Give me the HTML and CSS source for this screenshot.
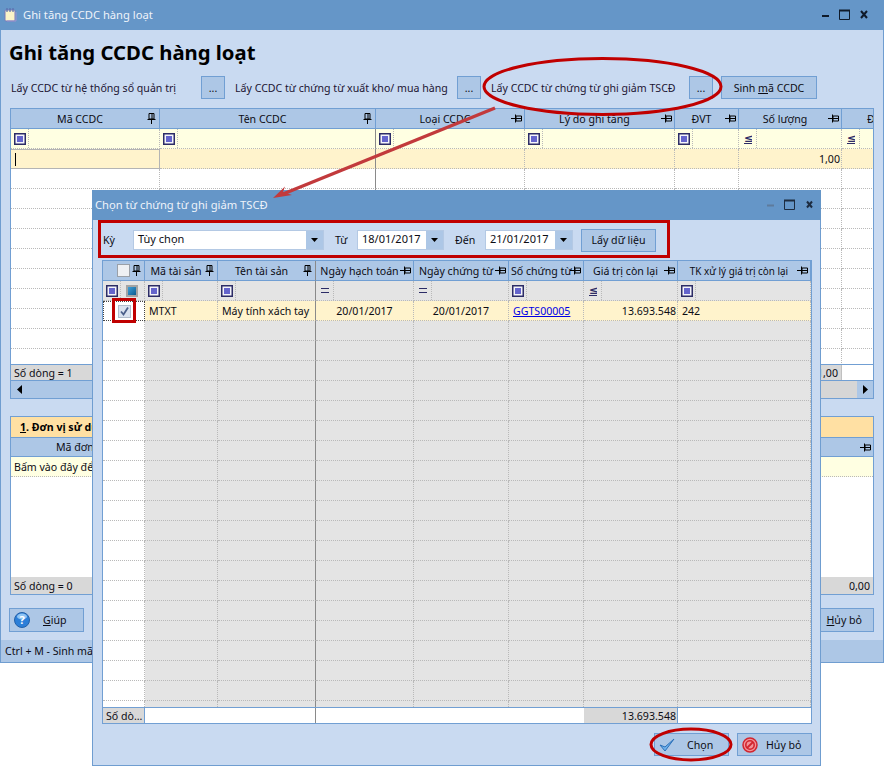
FILE: index.html
```html
<!DOCTYPE html>
<html lang="vi">
<head>
<meta charset="utf-8">
<title>Ghi tăng CCDC hàng loạt</title>
<link rel="stylesheet" href="styles.css">
</head>
<body>
<svg class="defs" width="0" height="0" aria-hidden="true">
  <symbol id="pin-v" viewBox="0 0 9 11"><path d="M2 .5h5v5.500H2zM5 1v5M.5 6.500h8M4.500 7v4" fill="none" stroke="#000"/></symbol>
  <symbol id="pin-h" viewBox="0 0 11 9"><path d="M5 2h5.500v5H5zM5 4.500H10M4.500 .5v8M0 4.500h4" fill="none" stroke="#000"/></symbol>
  <symbol id="flt" viewBox="0 0 12 12"><rect x=".75" y=".75" width="10.500" height="10.500" fill="#f4f4fa" stroke="#2c2c66" stroke-width="1.500"/><rect x="3" y="3" width="6" height="6" fill="#6464cc"/></symbol>
  <symbol id="arrow-d" viewBox="0 0 9 5"><path d="M1 0h7L4.500 4z" fill="#000"/></symbol>
</svg>

<main class="win">
  <header class="bar">
    <svg class="appicon" width="13" height="16" viewBox="0 0 13 16"><rect x="1" y="3" width="10" height="11" rx="1" fill="#fbf3c8" stroke="#7a78b8"/><path d="M3 1v4M6 1v4M9 1v4" stroke="#5a6fae" stroke-width="1.200"/><path d="M3 14h9v-9" fill="none" stroke="#9a94d0"/></svg>
    <span class="bar-title">Ghi tăng CCDC hàng loạt</span>
    <span class="ctl">
      <svg width="60" height="14" viewBox="0 0 60 14"><path d="M1 8h7" stroke="#0f1a2a" stroke-width="2"/><path d="M18.500 2.500h10v9h-10z" fill="none" stroke="#0f1a2a"/><path d="M18 2.500h11" stroke="#0f1a2a" stroke-width="2"/><path d="M40 3l6 7M46 3l-6 7" stroke="#0f1a2a" stroke-width="2"/></svg>
    </span>
  </header>
  <h1 class="heading">Ghi tăng CCDC hàng loạt</h1>
  <div class="tools">
    <span class="lbl lbl-a">Lấy CCDC từ hệ thống sổ quản trị</span><button class="btn dots">...</button>
    <span class="lbl lbl-b">Lấy CCDC từ chứng từ xuất kho/ mua hàng</span><button class="btn dots">...</button>
    <span class="lbl lbl-c">Lấy CCDC từ chứng từ ghi giảm TSCĐ</span><button class="btn dots">...</button>
    <button class="btn sinh"><span>Sinh <u>m</u>ã CCDC</span></button>
  </div>

  <section class="grid g-main">
    <div class="row head">
      <b>Mã CCDC<svg class="pin"><use href="#pin-v"/></svg></b><b>Tên CCDC<svg class="pin"><use href="#pin-v"/></svg></b><b>Loại CCDC<svg class="pin pinh"><use href="#pin-h"/></svg></b><b>Lý do ghi tăng<svg class="pin pinh"><use href="#pin-h"/></svg></b><b>ĐVT<svg class="pin pinh"><use href="#pin-h"/></svg></b><b>Số lượng<svg class="pin pinh"><use href="#pin-h"/></svg></b><b class="clip">Đ</b>
    </div>
    <div class="row filter yl">
      <i><svg class="f"><use href="#flt"/></svg></i><i><svg class="f"><use href="#flt"/></svg></i><i><svg class="f"><use href="#flt"/></svg></i><i><svg class="f"><use href="#flt"/></svg></i><i><svg class="f"><use href="#flt"/></svg></i><i><span class="le">≤</span></i><i><span class="le">≤</span></i>
    </div>
    <div class="row act">
      <i class="cur"><span class="caret"></span></i><i></i><i></i><i></i><i></i><i class="r">1,00</i><i></i>
    </div>
    <div class="rows">
      <div class="row"><i></i><i></i><i></i><i></i><i></i><i></i><i></i></div>
      <div class="row"><i></i><i></i><i></i><i></i><i></i><i></i><i></i></div>
      <div class="row"><i></i><i></i><i></i><i></i><i></i><i></i><i></i></div>
      <div class="row"><i></i><i></i><i></i><i></i><i></i><i></i><i></i></div>
      <div class="row"><i></i><i></i><i></i><i></i><i></i><i></i><i></i></div>
      <div class="row"><i></i><i></i><i></i><i></i><i></i><i></i><i></i></div>
      <div class="row"><i></i><i></i><i></i><i></i><i></i><i></i><i></i></div>
      <div class="row"><i></i><i></i><i></i><i></i><i></i><i></i><i></i></div>
      <div class="row"><i></i><i></i><i></i><i></i><i></i><i></i><i></i></div>
      <div class="row"><i></i><i></i><i></i><i></i><i></i><i></i><i></i></div>
    </div>
    <div class="foot-main">
      <span class="fcell fl">Số dòng = 1</span><span class="fcell fr">1,00</span>
    </div>
    <div class="scroll">
      <span class="sb"><svg width="5" height="9" viewBox="0 0 5 9"><path d="M5 0v9L0 4.500z"/></svg></span>
      <span class="track"></span>
      <span class="thumb"></span>
      <span class="sb"><svg width="5" height="9" viewBox="0 0 5 9"><path d="M0 0v9l5-4.500z"/></svg></span>
    </div>
  </section>

  <section class="grid g-sub">
    <div class="tab"><u>1</u>. Đơn vị sử dụng</div>
    <div class="subhead"><span class="sub-name">Mã đơn vị</span><svg class="pin pinh"><use href="#pin-h"/></svg></div>
    <div class="add">Bấm vào đây để thêm dòng mới</div>
    <div class="sub-rows"></div>
    <div class="foot-sub"><span class="fcell fl">Số dòng = 0</span><span class="fcell fr2">0,00</span></div>
  </section>

  <div class="actions">
    <button class="btn act-btn">
      <svg class="help" width="16" height="16" viewBox="0 0 16 16"><circle cx="8" cy="8" r="7.500" fill="#2c7fd8" stroke="#2360a8"/><ellipse cx="8" cy="4.500" rx="5" ry="3" fill="#8fc4f4"/><text x="8" y="12" text-anchor="middle" class="help-q">?</text></svg>
      <span class="act-txt"><u>G</u>iúp</span>
    </button>
    <button class="btn act-btn huy-main"><span><u>H</u>ủy bỏ</span></button>
  </div>
  <footer class="status">Ctrl + M - Sinh mã CCDC</footer>
</main>

<section class="dialog">
  <header class="bar dlg-bar">
    <span class="bar-title dlg-title">Chọn từ chứng từ ghi giảm TSCĐ</span>
    <span class="ctl ctl-dlg">
      <svg width="53" height="14" viewBox="0 0 53 14"><path d="M1 7.500h7" stroke="#5e7b9c" stroke-width="2"/><path d="M18.500 2.500h10v9h-10z" fill="none" stroke="#1d2c40"/><path d="M18 2.500h11" stroke="#1d2c40" stroke-width="2"/><path d="M41 3.500l5 6M46 3.500l-5 6" stroke="#1d2c40" stroke-width="2"/></svg>
    </span>
  </header>
  <div class="period">
    <span class="p-ky">Kỳ</span>
    <span class="combo c-ky"><span class="val">Tùy chọn</span><span class="drop"><svg width="9" height="5"><use href="#arrow-d"/></svg></span></span>
    <span class="p-tu">Từ</span>
    <span class="combo c-d1"><span class="val">18/01/2017</span><span class="drop"><svg width="9" height="5"><use href="#arrow-d"/></svg></span></span>
    <span class="p-den">Đến</span>
    <span class="combo c-d2"><span class="val">21/01/2017</span><span class="drop"><svg width="9" height="5"><use href="#arrow-d"/></svg></span></span>
    <button class="btn get">Lấy dữ liệu</button>
  </div>

  <section class="grid g-dlg">
    <div class="row head">
      <b class="chk-h"><span class="box"></span><svg class="pin pin-c"><use href="#pin-v"/></svg></b><b>Mã tài sản<svg class="pin"><use href="#pin-v"/></svg></b><b>Tên tài sản<svg class="pin"><use href="#pin-v"/></svg></b><b>Ngày hạch toán<svg class="pin pinh"><use href="#pin-h"/></svg></b><b>Ngày chứng từ<svg class="pin pinh"><use href="#pin-h"/></svg></b><b class="l">Số chứng từ<svg class="pin pinh"><use href="#pin-h"/></svg></b><b>Giá trị còn lại<svg class="pin pinh"><use href="#pin-h"/></svg></b><b class="tk">TK xử lý giá trị còn lại<svg class="pin pinh"><use href="#pin-h"/></svg></b>
    </div>
    <div class="row filter gy">
      <i class="two"><svg class="f f1"><use href="#flt"/></svg><span class="cube"></span></i><i><svg class="f"><use href="#flt"/></svg></i><i><svg class="f"><use href="#flt"/></svg></i><i><span class="eq"></span></i><i><span class="eq"></span></i><i><svg class="f"><use href="#flt"/></svg></i><i><span class="le">≤</span></i><i><svg class="f"><use href="#flt"/></svg></i>
    </div>
    <div class="row act sel">
      <i class="c first"><span class="box checked"><svg width="11" height="11" viewBox="0 0 11 11"><path d="M2 5.500l2.500 3L9 1.500" fill="none" stroke="#4a5f8a" stroke-width="1.800"/></svg></span></i><i>MTXT</i><i>Máy tính xách tay</i><i class="c">20/01/2017</i><i class="c">20/01/2017</i><i><a class="lnk" href="#">GGTS00005</a></i><i class="r">13.693.548</i><i>242</i>
    </div>
    <div class="rows gyrows">
      <div class="row"><i></i><i></i><i></i><i></i><i></i><i></i><i></i><i></i></div>
      <div class="row"><i></i><i></i><i></i><i></i><i></i><i></i><i></i><i></i></div>
      <div class="row"><i></i><i></i><i></i><i></i><i></i><i></i><i></i><i></i></div>
      <div class="row"><i></i><i></i><i></i><i></i><i></i><i></i><i></i><i></i></div>
      <div class="row"><i></i><i></i><i></i><i></i><i></i><i></i><i></i><i></i></div>
      <div class="row"><i></i><i></i><i></i><i></i><i></i><i></i><i></i><i></i></div>
      <div class="row"><i></i><i></i><i></i><i></i><i></i><i></i><i></i><i></i></div>
      <div class="row"><i></i><i></i><i></i><i></i><i></i><i></i><i></i><i></i></div>
      <div class="row"><i></i><i></i><i></i><i></i><i></i><i></i><i></i><i></i></div>
      <div class="row"><i></i><i></i><i></i><i></i><i></i><i></i><i></i><i></i></div>
      <div class="row"><i></i><i></i><i></i><i></i><i></i><i></i><i></i><i></i></div>
      <div class="row"><i></i><i></i><i></i><i></i><i></i><i></i><i></i><i></i></div>
      <div class="row"><i></i><i></i><i></i><i></i><i></i><i></i><i></i><i></i></div>
      <div class="row"><i></i><i></i><i></i><i></i><i></i><i></i><i></i><i></i></div>
      <div class="row"><i></i><i></i><i></i><i></i><i></i><i></i><i></i><i></i></div>
      <div class="row"><i></i><i></i><i></i><i></i><i></i><i></i><i></i><i></i></div>
      <div class="row"><i></i><i></i><i></i><i></i><i></i><i></i><i></i><i></i></div>
      <div class="row"><i></i><i></i><i></i><i></i><i></i><i></i><i></i><i></i></div>
      <div class="row"><i></i><i></i><i></i><i></i><i></i><i></i><i></i><i></i></div>
      <div class="row"><i></i><i></i><i></i><i></i><i></i><i></i><i></i><i></i></div>
    </div>
    <div class="row foot-dlg">
      <i class="tot">Số dò...</i><i class="blank"></i><i class="bold"></i><i class="blank"></i><i class="blank"></i><i class="blank"></i><i class="tot r">13.693.548</i><i class="blank"></i>
    </div>
  </section>

  <div class="dlg-actions">
    <button class="btn dlg-btn">
      <svg width="16" height="14" viewBox="0 0 16 14"><path d="M1 7l5 6L15 1 6 9z" fill="#6fb2ec" stroke="#2a6fb8" stroke-linejoin="round"/></svg>
      <span class="dlg-txt">Chọn</span>
    </button>
    <button class="btn dlg-btn">
      <svg width="16" height="16" viewBox="0 0 16 16"><circle cx="8" cy="8" r="7" fill="#f2949a" stroke="#d2252f" stroke-width="1.500"/><circle cx="8" cy="8" r="4.200" fill="none" stroke="#d2252f" stroke-width="1.600"/><path d="M5 11l6-6" stroke="#d2252f" stroke-width="1.800"/></svg>
      <span class="dlg-txt huy-txt">Hủy bỏ</span>
    </button>
  </div>
</section>

<svg class="marks" width="884" height="766" viewBox="0 0 884 766" aria-hidden="true">
  <ellipse cx="602.500" cy="86.500" rx="118.500" ry="28" class="mark"/>
  <ellipse cx="691" cy="744.500" rx="40" ry="15.500" class="mark"/>
  <rect x="99.500" y="221.500" width="569" height="35" class="mark"/>
  <rect x="113.500" y="299.500" width="21" height="22" class="mark"/>
  <path d="M495 108L283 194" class="arrow"/>
  <path d="M273 198L285 186.500L283 192L292 195z" class="head"/>
</svg>
</body>
</html>
```

FILE: styles.css
```css
* { box-sizing: border-box; }
html, body { margin: 0; height: 100%; }
body {
  position: relative;
  width: 884px;
  height: 766px;
  overflow: hidden;
  background: #fff;
  font: 10.600px/14px "Noto Sans", "Liberation Sans", sans-serif;
  color: #0c0c14;
}
.defs { position: absolute; }
button { font: inherit; color: inherit; padding: 0; cursor: default; }

.win {
  position: absolute;
  left: 0;
  top: 0;
  width: 884px;
  height: 663px;
  display: flex;
  flex-direction: column;
  background: #c9daf1;
  border: 1px solid #6f9dd0;
  border-top: 0;
}
.bar {
  height: 30px;
  flex: none;
  display: flex;
  align-items: center;
  background: #6596c8;
  color: #eef3fa;
  margin: 0 -1px;
  padding-left: 4px;
}
.bar-title { font-size: 11.200px; }
.appicon { margin-right: 6px; }
.ctl { margin-left: auto; margin-right: 3px; display: flex; }
.heading {
  margin: 9px 0 0 8px;
  font: bold 20.300px/26px "Noto Sans", "Liberation Sans", sans-serif;
  color: #000;
}
.tools {
  display: flex;
  align-items: center;
  height: 23px;
  margin-top: 11px;
  padding-left: 10px;
}
.lbl { white-space: nowrap; color: #1c1432; }
.lbl-a { width: 190px; }
.lbl-b { width: 222px; margin-left: 10px; }
.lbl-c { width: 198px; margin-left: 10px; }
.btn {
  display: flex;
  align-items: center;
  justify-content: center;
  background: #adc7e6;
  border: 1px solid #719fd3;
  border-radius: 0;
}
.dots { width: 24px; height: 23px; }
.sinh { width: 96px; height: 23px; margin-left: 8px; }

.grid { background: #fff; border: 1px solid #719fd3; }
.g-main {
  --cols: 149px 216px 149px 150px 64px 103px 32px;
  margin: 9px 9px 0;
  height: 291px;
  display: flex;
  flex-direction: column;
  overflow: hidden;
}
.row {
  display: grid;
  grid-template-columns: var(--cols);
  height: 20px;
  flex: none;
}
.row > i, .row > b {
  font-style: normal;
  font-weight: 400;
  display: flex;
  align-items: center;
  min-width: 0;
  overflow: hidden;
  white-space: nowrap;
  border-right: 1px dotted #b9b9b9;
  border-bottom: 1px dotted #b9b9b9;
  padding: 0 4px;
}
.row > i.r { justify-content: flex-end; padding-right: 1px; }
.row > i.c { justify-content: center; }
.head > b {
  position: relative;
  justify-content: center;
  background: #adc7e6;
  border-right: 1px solid #719fd3;
  border-bottom: 1px solid #719fd3;
  padding: 0 14px 0 4px;
}
.head > b.clip { padding: 0 0 0 25px; justify-content: flex-start; border-right: 0; }
.head > b.l { padding-left: 3px; justify-content: flex-start; }
.g-dlg .head > b.tk { font-size: 9.900px; }
.pin { position: absolute; right: 3px; top: 4px; width: 9px; height: 11px; }
.pinh { width: 11px; height: 9px; top: 5px; right: 2px; }
.yl { background: #ffffe2; }
.gy { background: #e4e4e4; }
.act { background: #fff3cc; }
.filter > i { padding: 0; position: relative; }
.filter > i::after {
  content: "";
  position: absolute;
  left: 17px;
  top: 0;
  bottom: 0;
  border-left: 1px dotted #b9b9b9;
}
.f { width: 12px; height: 12px; margin-left: 3px; flex: none; }
.le {
  margin-left: 5px;
  width: 8px;
  text-align: center;
  color: #2c2c66;
  font: 700 11px/11px "DejaVu Sans", sans-serif;
  border-bottom: 1px solid #2c2c66;
  height: 11px;
  overflow: hidden;
}
.eq { margin-left: 5px; width: 8px; height: 5px; border-top: 1px solid #2c2c66; border-bottom: 1px solid #2c2c66; }
.cur { border: 1px solid #b4b4b4 !important; border-left: 0 !important; padding-left: 4px; }
.caret { width: 1px; height: 13px; background: #000; }
.g-main .row > i:nth-child(2) { border-right-color: #8a8a8a; border-right-style: solid; }
.rows { flex: 1; min-height: 0; overflow: hidden; }
.foot-main {
  display: flex;
  height: 16px;
  flex: none;
  border-top: 1px solid #719fd3;
  background: #fff;
}
.fcell { background: #d8d8d8; display: flex; align-items: center; padding: 0 3px; border-right: 1px solid #719fd3; }
.foot-main .fl { width: 149px; }
.foot-main .fr { width: 682px; justify-content: flex-end; border-right: 1px solid #c0c0c0; }
.scroll {
  height: 18px;
  flex: none;
  display: flex;
  background: #adc7e6;
  border-top: 1px solid #719fd3;
}
.sb { width: 16px; display: flex; align-items: center; justify-content: center; background: #adc7e6; }
.track { width: 150px; }
.thumb { flex: 1; background: #d6d6d6; }

.g-sub {
  margin: 17px 9px 0;
  height: 179px;
  display: flex;
  flex-direction: column;
}
.tab {
  height: 20px;
  flex: none;
  background: #ffe0a3;
  font-weight: 700;
  padding: 3px 0 0 9px;
  color: #000;
}
.subhead {
  position: relative;
  height: 20px;
  flex: none;
  background: #adc7e6;
  border-top: 1px solid #719fd3;
  border-bottom: 1px solid #719fd3;
  display: flex;
  align-items: center;
  padding-left: 45px;
}
.add {
  height: 20px;
  flex: none;
  background: #ffffe2;
  border-bottom: 1px dotted #b9b9b9;
  padding: 3px 0 0 3px;
}
.sub-rows { flex: 1; }
.foot-sub {
  display: flex;
  justify-content: space-between;
  height: 17px;
  flex: none;
  background: #d8d8d8;
}
.foot-sub .fcell { border: 0; }

.actions {
  display: flex;
  justify-content: space-between;
  margin: 13px 9px 0 8px;
}
.act-btn { width: 75px; height: 24px; justify-content: flex-start; padding-left: 4px; }
.help-q { font: 700 11px "Noto Sans", sans-serif; fill: #fff; }
.act-txt { margin-left: 13px; }
.huy-main { justify-content: flex-end; padding-right: 11px; }
.status {
  margin-top: 8px;
  flex: 1;
  background: #adc7e6;
  padding: 4px 0 0 4px;
}

.dialog {
  position: absolute;
  left: 92px;
  top: 190px;
  width: 729px;
  height: 576px;
  display: flex;
  flex-direction: column;
  background: #c9daf1;
  border: 1px solid #6f9dd0;
  border-top: 0;
}
.dlg-bar { padding-left: 3px; }
.ctl-dlg { margin-right: 2px; }
.period {
  display: flex;
  align-items: center;
  height: 40px;
  flex: none;
  padding-left: 10px;
}
.p-ky { width: 30px; }
.p-tu { width: 22px; margin-left: 11px; }
.p-den { width: 30px; margin-left: 11px; }
.combo {
  display: flex;
  height: 20px;
  background: #fff;
  border: 1px solid #b4c9e4;
}
.val { flex: 1; padding: 1px 0 0 4px; font-size: 11px; }
.drop { width: 17px; background: #adc7e6; display: flex; align-items: center; justify-content: center; }
.c-ky { width: 191px; }
.c-d1 { width: 87px; }
.c-d2 { width: 88px; }
.get { width: 75px; height: 23px; margin-left: 8px; }

.g-dlg {
  --cols: 42px 73px 98px 98px 95px 75px 94px 133px;
  margin: 0 0 0 9px;
  width: 710px;
  height: 464px;
  display: flex;
  flex-direction: column;
  overflow: hidden;
}
.g-dlg .row > i:nth-child(3), .g-dlg .row > b:nth-child(3) { border-right: 1px solid #8a8a8a; }
.g-dlg .head > b { padding: 0 12px 0 2px; }
.g-dlg .head > b.chk-h { padding: 0; justify-content: flex-start; }
.box {
  display: flex;
  align-items: center;
  justify-content: center;
  width: 13px;
  height: 13px;
  border: 1px solid #9aa0a8;
  background: #eef0f3;
}
.chk-h .box { margin-left: 14px; }
.cube {
  width: 12px;
  height: 12px;
  margin-left: 8px;
  background: linear-gradient(135deg, #40a0d8, #0c5c90);
  border: 2px solid #a4a4a4;
}
.sel .first { background: #fff; border: 1px dotted #444; }
.sel .first .box { background: #d9e2ef; border-color: #b0bccb; }
.lnk { color: #0000e6; text-decoration: underline; }
.gyrows { background: #e4e4e4; }
.gyrows .row > i:first-child { background: #fff; }
.foot-dlg { height: 16px; background: #fff; border-top: 1px solid #719fd3; }
.foot-dlg > i { border-bottom: 0; }
.foot-dlg > i.blank { border-right: 0; }
.foot-dlg > i.bold { border-right: 1px solid #8a8a8a; }
.foot-dlg > i.tot { background: #d8d8d8; padding: 0 1px 0 3px; border-right: 1px solid #719fd3; }
.dlg-actions { display: flex; justify-content: flex-end; gap: 8px; margin: 9px 8px 0 0; }
.dlg-btn { width: 75px; height: 23px; justify-content: flex-start; padding-left: 4px; }
.dlg-txt { margin-left: 12px; }
.dlg-txt.huy-txt { margin-left: 8px; }

.marks { position: absolute; left: 0; top: 0; pointer-events: none; }
.mark { fill: none; stroke: #c00000; stroke-width: 3; }
.arrow { stroke: #c23a3c; stroke-width: 3.500; fill: none; }
.head { fill: #c23a3c; }
```
